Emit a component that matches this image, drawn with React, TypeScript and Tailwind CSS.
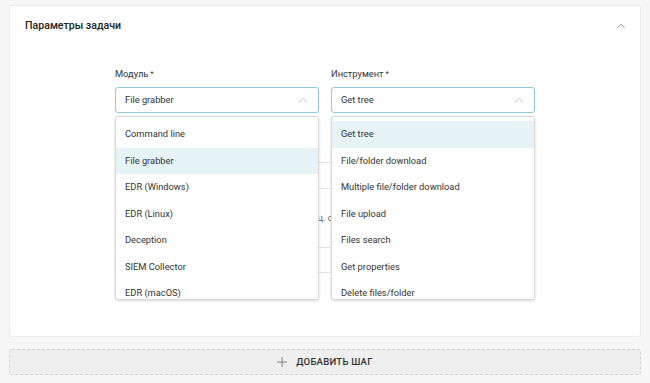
import React from "react";

const Chevron = ({ className }: { className?: string }) => (
  <svg viewBox="0 0 12 8" className={className} fill="none" stroke="currentColor" strokeWidth="1.1">
    <path d="M1 6.5 L6 1.5 L11 6.5" />
  </svg>
);

const modules = ["Command line", "File grabber", "EDR (Windows)", "EDR (Linux)", "Deception", "SIEM Collector", "EDR (macOS)"];
const tools = ["Get tree", "File/folder download", "Multiple file/folder download", "File upload", "Files search", "Get properties", "Delete files/folder"];

function Field({ label, value, items, selected }: { label: string; value: string; items: string[]; selected: number }) {
  return (
    <div className="w-[204px] flex flex-col">
      <div className="text-[9.3px] leading-[14px] text-[#333] mb-[6px]">
        {label}
        <sup className="text-[8px] ml-[2px] relative top-[-1px]">*</sup>
      </div>
      <div className="relative">
        <div className="h-[26px] border border-[#8fcbe0] rounded-[3px] flex items-center justify-between pl-[9px] pr-[9px] bg-white text-[9.3px] text-[#333]">
          <span>{value}</span>
          <Chevron className="w-[12px] h-[7px] text-[#c2c2c2]" />
        </div>
        <div className="absolute z-10 left-0 right-0 top-[29px] h-[184px] overflow-hidden bg-white border border-[#d8d8d8] rounded-[3px] shadow-[0_1px_3px_rgba(0,0,0,0.15)] pt-[4px]">
          {items.map((it, i) => (
            <div
              key={it}
              className={`h-[26.5px] flex items-center pl-[9px] text-[9.3px] text-[#333] ${i === selected ? "bg-[#e6f3f7]" : ""}`}
            >
              {it}
            </div>
          ))}
        </div>
      </div>
    </div>
  );
}

export default function App() {
  return (
    <div className="w-[650px] h-[383px] bg-[#f7f7f7] pl-[9px] pr-[9px] pt-[5px] font-['Roboto',sans-serif] overflow-hidden">
      <div className="h-[332px] bg-white border border-[#ebebeb] rounded-[3px]">
        <div className="flex items-center justify-between pl-[15px] pr-[14px] pt-[12px]">
          <span className="text-[10.6px] font-medium text-[#222] leading-[16px]">Параметры задачи</span>
          <Chevron className="w-[10px] h-[6px] text-[#888]" />
        </div>
        <div className="pl-[105px] pt-[33px]">
          <div className="flex gap-[12px]">
            <Field label="Модуль" value="File grabber" items={modules} selected={1} />
            <Field label="Инструмент" value="Get tree" items={tools} selected={0} />
          </div>
          <div className="w-[420px] text-[9.3px] text-[#666]">
            <div className="h-[50px] border-b border-[#e3e3e3]" />
            <div className="h-[26px] border-b border-[#e3e3e3]" />
            <div className="h-[59px] border-b border-[#e3e3e3] flex items-center justify-center">ц. с</div>
            <div className="h-[25px] border-b border-[#e3e3e3]" />
          </div>
        </div>
      </div>
      <div className="mt-[12px] h-[26px] bg-[#efefef] border border-dashed border-[#d2d2d2] rounded-[3px] flex items-center justify-center gap-[9px]">
        <svg viewBox="0 0 12 12" className="w-[10px] h-[10px] text-[#777]" stroke="currentColor" strokeWidth="1.1">
          <path d="M6 0 V12 M0 6 H12" />
        </svg>
        <span className="text-[9.6px] font-medium text-[#333] tracking-[0.2px]">ДОБАВИТЬ ШАГ</span>
      </div>
    </div>
  );
}
